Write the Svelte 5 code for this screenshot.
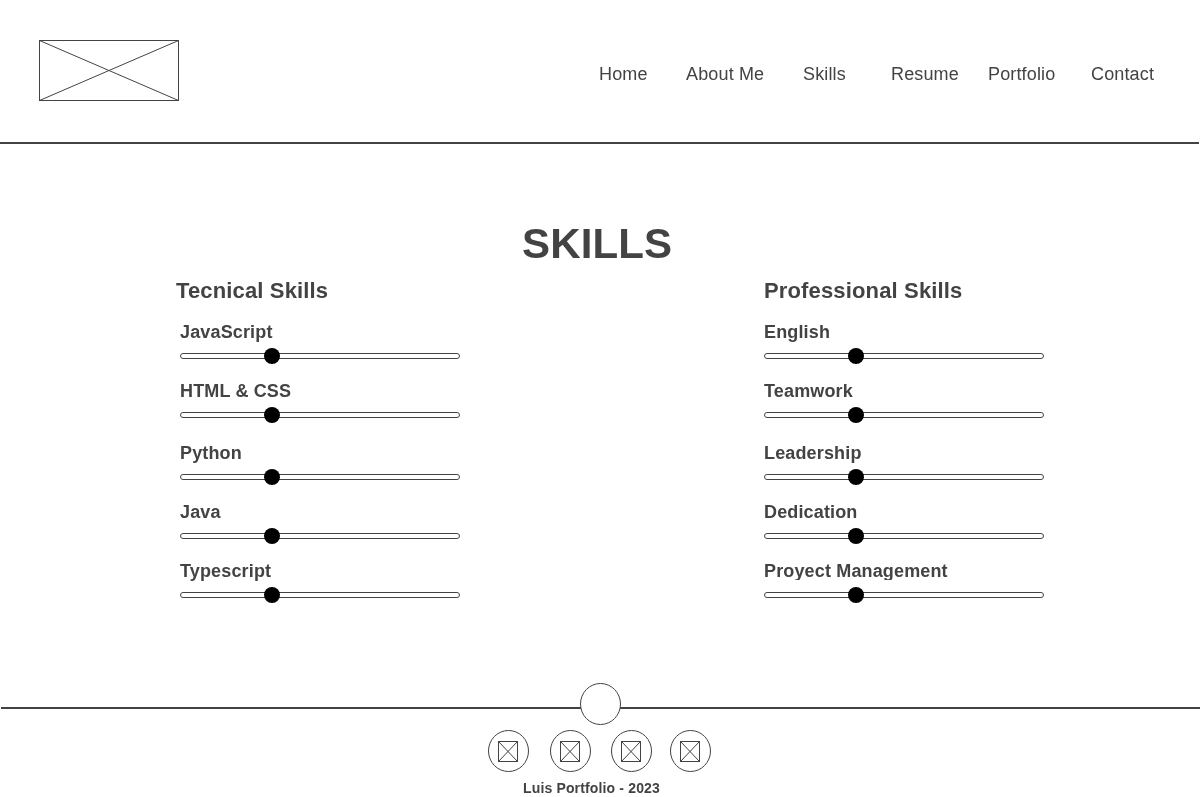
<script>
  const nav = [
    { label: 'Home', width: 87 },
    { label: 'About Me', width: 117 },
    { label: 'Skills', width: 88 },
    { label: 'Resume', width: 97 },
    { label: 'Portfolio', width: 103 },
    { label: 'Contact', width: 110 }
  ];
  const groups = [
    { title: 'Tecnical Skills', skills: ['JavaScript', 'HTML & CSS', 'Python', 'Java', 'Typescript'] },
    { title: 'Professional Skills', skills: ['English', 'Teamwork', 'Leadership', 'Dedication', 'Proyect Management'] }
  ];
  const level = 33;
</script>

<div class="page">
  <header>
    <svg class="logo" width="140" height="61" viewBox="0 0 140 61">
      <rect x=".5" y=".5" width="139" height="60" />
      <path d="M.5 .5L139.5 60.5M139.5 .5L.5 60.5" />
    </svg>
    <nav>
      {#each nav as item}
        <span class="link" style="width: {item.width}px">{item.label}</span>
      {/each}
    </nav>
  </header>

  <main>
    <h1>SKILLS</h1>
    <div class="columns">
      {#each groups as group, g}
        <section class:technical={g === 0}>
          <h2>{group.title}</h2>
          <ul>
            {#each group.skills as skill}
              <li>
                <span class="name" class:clipped={skill === 'Proyect Management'}>{skill}</span>
                <div class="track"><i class="knob" style="left: {level}%"></i></div>
              </li>
            {/each}
          </ul>
        </section>
      {/each}
    </div>
  </main>

  <footer>
    <div class="divider">
      <svg width="41" height="42" viewBox="0 0 41 42"><ellipse cx="20.5" cy="21" rx="20" ry="20.5" /></svg>
    </div>
    <div class="social">
      {#each [0, 1, 2, 3] as n}
        <svg width="41" height="42" viewBox="0 0 41 42">
          <ellipse cx="20.5" cy="21" rx="20" ry="20.5" />
          <rect x="10.5" y="11.5" width="19" height="20" />
          <path d="M10.5 11.5L29.5 31.5M29.5 11.5L10.5 31.5" />
        </svg>
      {/each}
    </div>
    <p>Luis Portfolio - 2023</p>
  </footer>
</div>

<style>
  :global(body) { margin: 0; background: #fff; overflow: hidden; }
  .page {
    width: 1200px;
    height: 797px;
    overflow: hidden;
    display: flex;
    flex-direction: column;
    color: #434343;
    font-family: "Liberation Sans", Arial, sans-serif;
    letter-spacing: .15px;
    will-change: transform;
  }
  svg { display: block; fill: #fff; stroke: #434343; stroke-width: 1; }
  header {
    box-sizing: border-box;
    width: 1199px;
    height: 144px;
    display: flex;
    justify-content: space-between;
    padding: 40px 0 0 39px;
    border-bottom: 2px solid #434343;
  }
  nav { display: flex; padding-top: 24px; margin-right: -2px; font-size: 18px; line-height: 20px; }
  .link { flex: none; white-space: nowrap; }
  main { height: 539px; padding-top: 76px; box-sizing: border-box; }
  h1 { margin: 0 0 11px 522px; font-size: 42px; line-height: 48px; }
  .columns { display: grid; grid-template-columns: 280px 280px; column-gap: 304px; padding-left: 180px; }
  h2 { margin: 0 0 19px; font-size: 22px; line-height: 24px; white-space: nowrap; }
  .technical h2 { margin-left: -4px; }
  ul { margin: 0; padding: 0; list-style: none; display: flex; flex-direction: column; gap: 22px; }
  li:nth-child(3) { margin-top: 3px; }
  .name { display: block; font-size: 18px; line-height: 20px; font-weight: bold; margin-bottom: 11px; white-space: nowrap; }
  .clipped { clip-path: inset(0 0 1px); }
  .track { position: relative; box-sizing: border-box; height: 6px; border: 1px solid #434343; border-radius: 3px; }
  .knob {
    position: absolute;
    top: -6px;
    width: 16px;
    height: 16px;
    margin-left: -8.74px;
    border-radius: 50%;
    background: #000;
  }
  .divider {
    height: 42px;
    padding-left: 580px;
    background: linear-gradient(#434343, #434343) 1px 24px / 1199px 2px no-repeat;
  }
  .social { display: grid; grid-template-columns: 62px 61px 59px 41px; padding: 5px 0 8px 488px; }
  p { margin: 0 0 0 523px; font-size: 14px; line-height: 16px; font-weight: bold; }
</style>
